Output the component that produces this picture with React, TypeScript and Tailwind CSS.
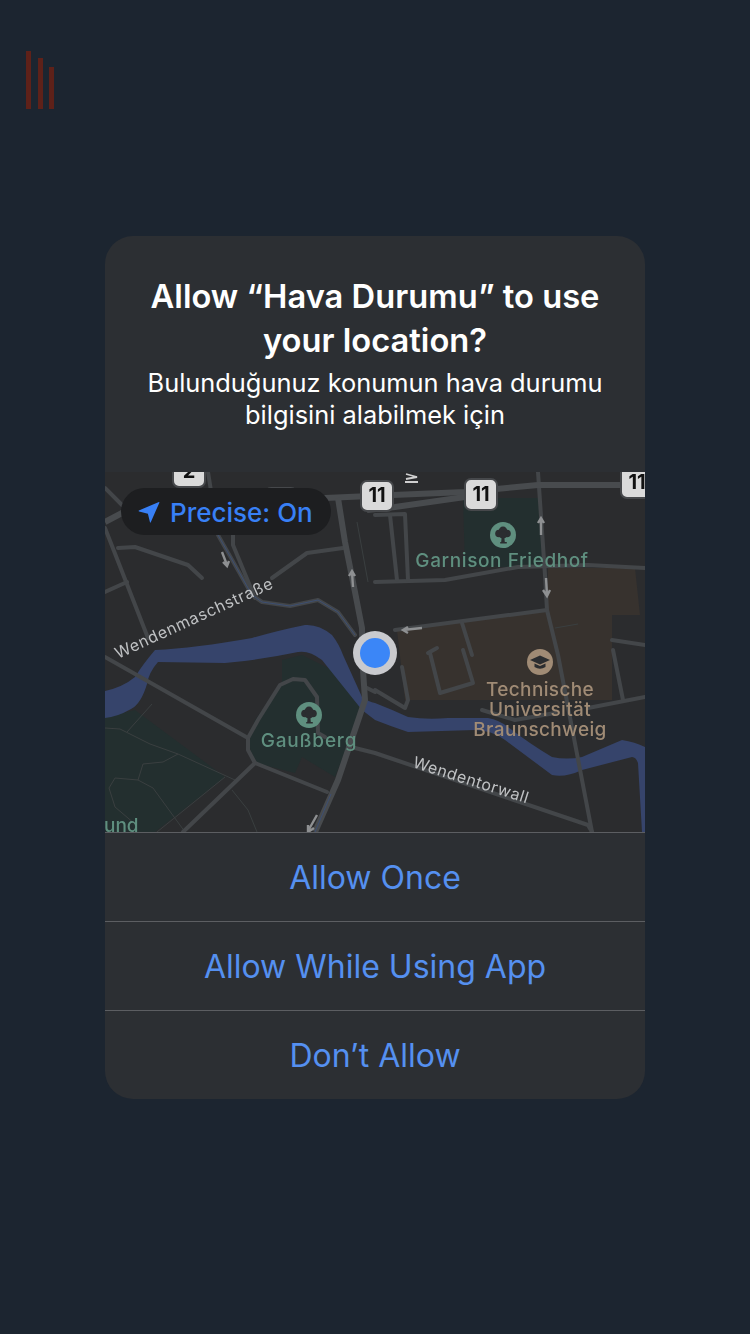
const majorRoads = [
  "M0 50L17 41L60 34L120 30L220 26L288 23L360 20L433 13L517 13L540 13",
  "M262 38L290 35L325 30L360 25",
  "M233 26L240 70L250 120L257 156L258 198L260 228L233 308L210 360",
];

const roads = [
  "M103 0L113 63L147 123L157 130L185 134L213 128L233 140L250 163",
  "M128 63L128 73L150 126",
  "M167 106L202 81L238 76",
  "M0 56L43 166",
  "M13 76L30 75L83 93L97 106",
  "M0 120L22 110",
  "M0 16L17 33",
  "M0 185L143 266",
  "M143 266L153 248L175 213L188 207L200 208L212 225L213 261L220 265",
  "M143 266L143 278L150 291L222 320",
  "M150 291L78 360",
  "M250 276L270 281L483 353L487 360",
  "M433 0L440 103L442 138L453 183L487 360",
  "M270 110L340 108L413 95L483 93L540 96",
  "M270 43L300 42L303 108",
  "M285 43L292 108",
  "M290 158L442 138",
  "M357 151L367 183",
  "M297 195L303 228L300 236L270 218",
  "M323 181L332 176M325 181L335 221L368 211L358 178",
  "M508 178L518 228",
  "M483 236L540 225",
  "M377 238L410 248L450 241",
  "M507 168L540 173",
  "M260 215L270 220",
];

const thinRoads = [
  "M0 256L15 257L45 272L73 282L130 308",
  "M47 232L22 260",
  "M73 282L58 290L38 292L33 308",
  "M33 308L10 306L4 316L10 335L30 352",
  "M33 308L48 316L80 360",
  "M120 305L52 360",
  "M127 318L143 338L152 360",
  "M450 156L473 152",
  "M252 50L263 110",
];

const arrows = [
  "M117 80L122 93M118 90L122 94L124 89",
  "M248 115L247 100M244 104L247 99L250 104",
  "M436 63L436 46M433 51L436 46L439 51",
  "M441 106L442 123M438 118L442 124L445 118",
  "M317 156L298 158M303 155L298 158L303 161",
  "M212 343L203 359M203 353L203 360L209 356",
];

const Shield = ({ x, y, h, label }: { x: number; y: number; h: number; label?: string }) => (
  <g>
    <rect x={x} y={y} width="32" height={h} rx="6" fill="#dadada" stroke="#46484b" strokeWidth="2" />
    {label && (
      <text x={x + 16} y={y + h - 9} textAnchor="middle" fontSize="20" fontWeight="700" fill="#111">
        {label}
      </text>
    )}
  </g>
);

const TreePoi = ({ x, y }: { x: number; y: number }) => (
  <g transform={`translate(${x} ${y})`}>
    <circle r="13" fill="#5f8f7f" />
    <g fill="#2b2d30">
      <circle cx="-4" cy="-1.5" r="3.8" />
      <circle cx="4" cy="-1.5" r="3.8" />
      <circle cx="0" cy="-4" r="4.4" />
      <circle cx="0" cy="0" r="3.6" />
      <path d="M-1.2 1h2.4l.6 6h2v1.4h-6.6V7h1z" />
    </g>
  </g>
);

const MapView = () => (
  <svg viewBox="0 0 540 360" className="block h-[360px] w-[540px] blur-[0.4px]" fontFamily="Inter, sans-serif">
    <rect width="540" height="360" fill="#2b2c2e" />
    {/* parks and campus */}
    <path d="M358 26H435L440 95H360Z" fill="#232f2f" />
    <path d="M443 96H530L535 143H507V228H300L292 158L442 138Z" fill="#37322e" />
    <path d="M0 245L30 238L120 305L50 360H0Z" fill="#232f2f" />
    <path d="M177 188L197 183L227 198L257 238L230 305L197 285L190 301L150 291L143 271L150 248L177 211Z" fill="#232f2f" />
    {/* river */}
    <path
      d="M0 219Q18 215 30 205Q38 192 50 178Q90 176 147 166Q175 158 200 153Q214 152 227 163Q234 172 238 183L257 225Q264 230 270 231Q288 238 303 245Q322 248 343 246L383 246Q394 248 403 255Q425 272 447 285Q462 288 477 285L517 268Q530 270 540 275V360H537L533 291Q531 285 527 285L477 298Q460 306 447 303L400 268Q386 258 370 258L303 260Q285 254 270 248L257 238L217 188Q204 178 193 180Q155 188 120 191L53 190Q44 200 42 212Q36 232 26 237Q12 245 0 246Z"
      fill="#36446b"
    />
    {thinRoads.map((d) => (
      <path key={d} d={d} fill="none" stroke="#3a3f40" strokeWidth="1" />
    ))}
    {roads.map((d) => (
      <path key={d} d={d} fill="none" stroke="#434649" strokeWidth="4" strokeLinejoin="round" strokeLinecap="round" />
    ))}
    {majorRoads.map((d) => (
      <path key={d} d={d} fill="none" stroke="#484b4e" strokeWidth="6" strokeLinejoin="round" />
    ))}
    <path d="M113 63L147 123L157 130L185 134L213 128L233 140L250 163" fill="none" stroke="#3d4f72" strokeWidth="1" />
    <path d="M226 322L210 360" fill="none" stroke="#3d4f72" strokeWidth="1" />
    {arrows.map((d) => (
      <path key={d} d={d} fill="none" stroke="#8e9092" strokeWidth="2.4" />
    ))}
    <path d="M301 2L312 5L301 7M300 10H313" fill="none" stroke="#cfcfcf" strokeWidth="1.8" />

    <Shield x={68} y={-16} h={31} label="2" />
    <Shield x={160} y={16} h={30} />
    <Shield x={256} y={9} h={30} label="11" />
    <Shield x={360} y={7} h={31} label="11" />
    <Shield x={516} y={-5} h={31} label="11" />

    <TreePoi x={398} y={63} />
    <TreePoi x={204} y={243} />
    <g transform="translate(435 190)">
      <circle r="13" fill="#a08b75" />
      <path d="M0 -6.5L10 -2L0 2.5L-10 -2Z" fill="#2b2d30" />
      <path d="M-5.5 1.5V5Q0 8.5 5.5 5V1.5L0 4Z" fill="#2b2d30" />
    </g>

    <g fontSize="19" fontWeight="500" textAnchor="middle">
      <text x="397" y="95" fill="#5f8f7f" letterSpacing="0.6">Garnison Friedhof</text>
      <text x="204" y="275" fill="#5f8f7f" letterSpacing="0.8">Gaußberg</text>
      <g fill="#a08b75" letterSpacing="0.35">
        <text x="435" y="224">Technische</text>
        <text x="435" y="244">Universität</text>
        <text x="435" y="264">Braunschweig</text>
      </g>
    </g>
    <text x="-1" y="360" fontSize="19" fontWeight="500" fill="#5f8f7f">und</text>
    <g fontSize="16" fill="#bfc1c3">
      <text transform="translate(13 187) rotate(-24.6)" letterSpacing="0.7">Wendenmaschstraße</text>
      <text transform="translate(307 295) rotate(17.6)" letterSpacing="0.6">Wendentorwall</text>
    </g>

    <circle cx="270" cy="181" r="22" fill="#c9cace" />
    <circle cx="270" cy="181" r="15" fill="#3b86f7" />
  </svg>
);

const ActionButton = ({ label }: { label: string }) => (
  <button className="h-[89px] w-full border-t border-[#5c5e62] pt-[2px] text-[32px] leading-none text-[#5590f0]">
    {label}
  </button>
);

export default function App() {
  return (
    <div className="min-h-[1334px] bg-[#1c2530] pt-[51px] font-[Inter,sans-serif]">
      <div className="flex h-[58px] items-end pl-[26px]">
        <div className="h-[58px] w-[5px] bg-[#5e2119]" />
        <div className="ml-[7px] h-[51px] w-[5px] bg-[#5e2119]" />
        <div className="ml-[6px] h-[42px] w-[5px] bg-[#5e2119]" />
      </div>

      <div className="mx-auto mt-[127px] w-[540px] overflow-hidden rounded-[28px] bg-[#2c2f33]">
        <div className="h-[236px] px-6 pt-[38px] text-center text-white">
          <h1 className="text-[32.7px] font-semibold leading-[44px]">
            Allow “Hava Durumu” to use
            <br />
            your location?
          </h1>
          <p className="mt-[5px] text-[25.4px] leading-[32px]">
            Bulunduğunuz konumun hava durumu
            <br />
            bilgisini alabilmek için
          </p>
        </div>

        <div className="relative h-[360px]">
          <MapView />
          <div className="absolute left-4 top-4 flex h-[47px] w-[210px] items-center rounded-full bg-[#1d1e20] pl-[17px] text-[26px] font-medium text-[#3880f6]">
            <svg viewBox="0 0 20 20" className="h-[22px] w-[22px]">
              <path d="M0.8 8.6L19 0.9Q19.6 0.8 19.4 1.5L11.6 19.4Q11.2 20 10.9 19.4L9 11.6L1 9.6Q0.2 9.2 0.8 8.6Z" fill="#3880f6" />
            </svg>
            <span className="ml-[10px] pt-[1px]">Precise: On</span>
          </div>
        </div>

        <ActionButton label="Allow Once" />
        <ActionButton label="Allow While Using App" />
        <ActionButton label="Don’t Allow" />
      </div>
    </div>
  );
}
